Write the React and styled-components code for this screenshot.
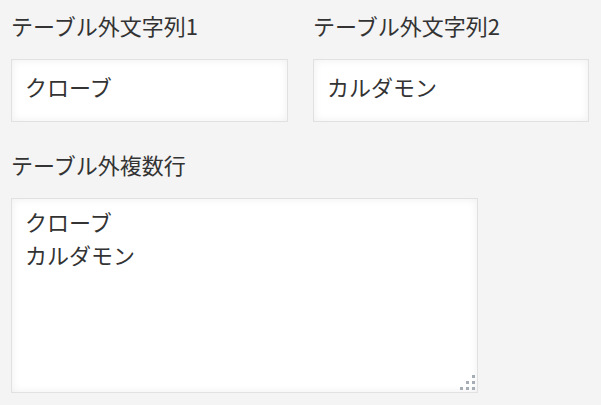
import React from "react";
import styled, { createGlobalStyle } from "styled-components";

const Global = createGlobalStyle`
  html, body { margin: 0; padding: 0; background: #f4f4f4; }
  body { font-family: "Noto Sans CJK JP", "Noto Sans", sans-serif; color: #333; }
`;

const Page = styled.div`
  padding: 10px 11px;
  display: flex;
  flex-direction: column;
  gap: 27px;
`;

const Row = styled.div`
  display: grid;
  grid-template-columns: 277px 276px;
  column-gap: 25px;
`;

const Field = styled.div`
  display: flex;
  flex-direction: column;
`;

const Label = styled.label`
  font-size: 22px;
  line-height: 30px;
  color: #333;
  margin-bottom: 19px;
`;

const boxStyle = `
  box-sizing: border-box;
  border: 1px solid #e1e1e1;
  background: #fff;
  box-shadow: inset 0 0 8px rgba(0, 0, 0, 0.07);
  font-family: "Noto Sans CJK JP", "Noto Sans", sans-serif;
  font-size: 22px;
  color: #333;
  outline: none;
  margin: 0;
`;

const Input = styled.input`
  ${boxStyle}
  width: 100%;
  height: 63px;
  padding: 0 13px 9px;
`;

const AreaWrap = styled.div`
  position: relative;
  width: 467px;
  height: 195px;
`;

const TextArea = styled.textarea`
  ${boxStyle}
  display: block;
  width: 100%;
  height: 100%;
  padding: 6px 13px;
  line-height: 33px;
  resize: none;
`;

const Grip = styled.svg`
  position: absolute;
  right: 3px;
  bottom: 3px;
  width: 15px;
  height: 15px;
  pointer-events: none;
`;

export default function App() {
  return (
    <>
      <Global />
      <Page>
        <Row>
          <Field>
            <Label>テーブル外文字列1</Label>
            <Input defaultValue="クローブ" />
          </Field>
          <Field>
            <Label>テーブル外文字列2</Label>
            <Input defaultValue="カルダモン" />
          </Field>
        </Row>
        <Field>
          <Label>テーブル外複数行</Label>
          <AreaWrap>
            <TextArea defaultValue={"クローブ\nカルダモン"} />
            <Grip viewBox="0 0 15 15">
              <g fill="#a7adb5">
                <rect x="12" y="0" width="3" height="3" />
                <rect x="6" y="6" width="3" height="3" />
                <rect x="12" y="6" width="3" height="3" />
                <rect x="0" y="12" width="3" height="3" />
                <rect x="6" y="12" width="3" height="3" />
                <rect x="12" y="12" width="3" height="3" />
              </g>
            </Grip>
          </AreaWrap>
        </Field>
      </Page>
    </>
  );
}
